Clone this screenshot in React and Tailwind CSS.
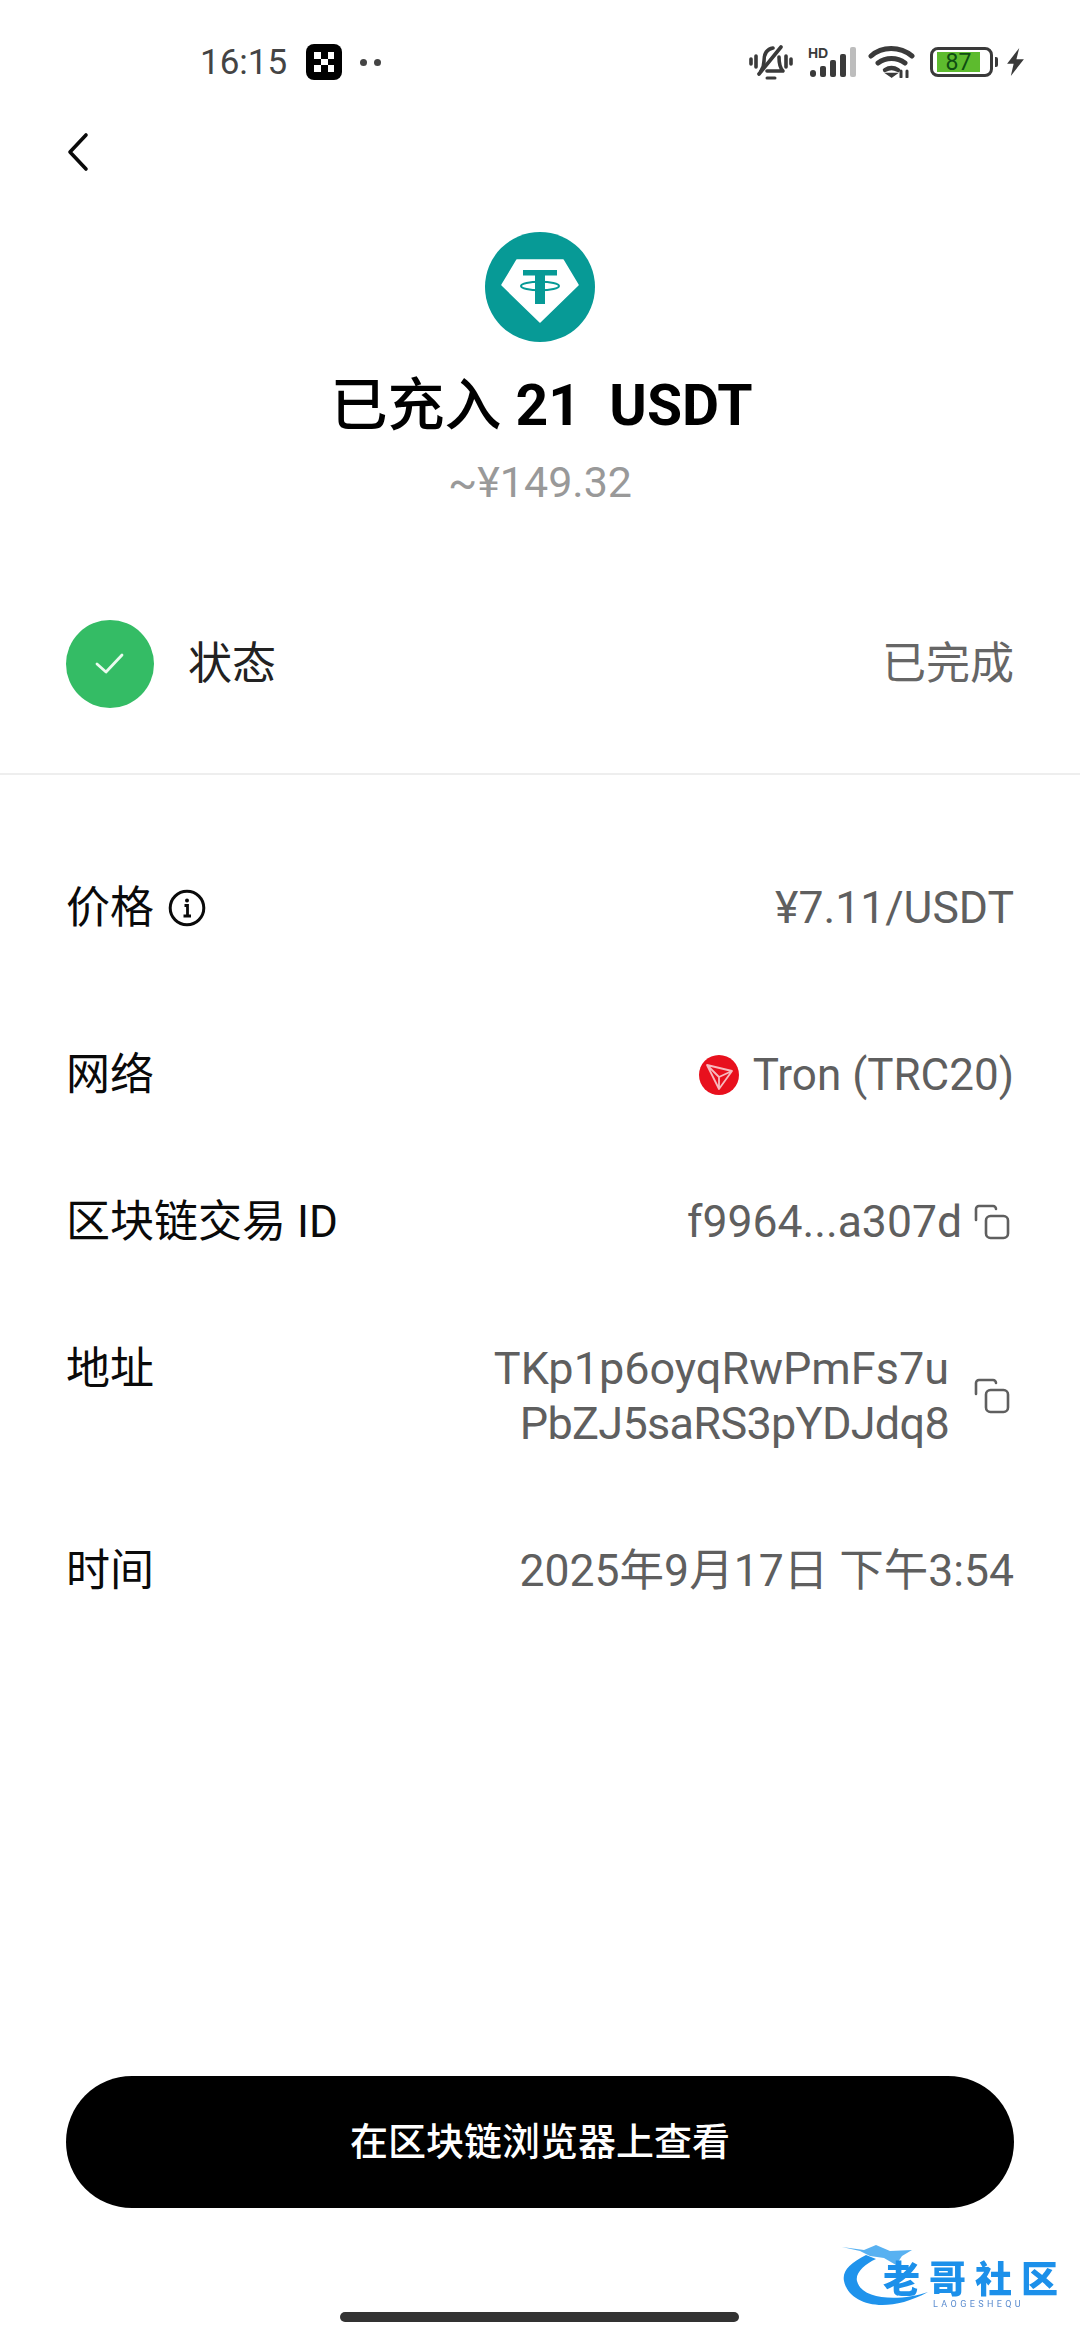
const FONT = "font-['Roboto','Noto_Sans_CJK_SC',sans-serif]";

function MuteIcon() {
  return (
    <svg width="44" height="36" viewBox="0 0 44 36" fill="none" stroke="#3a3a3a" strokeWidth="3.600" strokeLinecap="round" strokeLinejoin="round">
      <path d="M2 15v5M7 12v11M37 12v11M42 15v5" />
      <path d="M12 27c2-3 3-6 3-10 0-7 3-12 9-13" />
      <path d="M30 13c0 6 1 11 4 14H18" />
      <path d="M10 30 32 3" />
      <path d="M18 34h8" strokeWidth="3" />
    </svg>
  );
}

function SignalIcon() {
  return (
    <div className="relative w-[47px] h-[30px]">
      <span className="absolute left-[-1px] top-[-1px] text-[14px] leading-none font-bold text-[#3a3a3a] font-['Liberation_Sans',sans-serif]">HD</span>
      <svg className="absolute left-0 top-0" width="47" height="30" viewBox="0 0 47 30" fill="#3a3a3a">
        <rect x="1" y="23" width="6" height="7" rx="3" />
        <rect x="11" y="19" width="6" height="11" rx="2" />
        <rect x="21" y="13" width="6" height="17" rx="2" />
        <rect x="31" y="7" width="6" height="23" rx="2" />
        <rect x="41" y="0" width="6" height="30" rx="2" fill="#bdbdbd" />
      </svg>
    </div>
  );
}

function WifiIcon() {
  return (
    <svg width="47" height="32" viewBox="0 0 47 32" fill="none" stroke="#3a3a3a" strokeWidth="5" strokeLinecap="round">
      <path d="M3 10C14 0 32 0 44 10" />
      <path d="M10 17c8-6 19-6 27 0" />
      <path d="M17 24c4-2.500 9-2.500 13 0" strokeWidth="4.400" />
      <path d="M23.500 31l-5-3.500h10z" fill="#3a3a3a" strokeWidth="1.500" />
      <path d="M33 25v6M39 25v6" strokeWidth="3" />
    </svg>
  );
}

function Battery() {
  return (
    <div className="flex items-center gap-[2px]">
      <div className="w-[63px] h-[30px] border-[3px] border-[#3a3a3a] rounded-[8px] px-[4px] py-[2px] flex">
        <div className="w-[43px] bg-[#5dbb2e] flex items-center justify-center text-[#0f4d12] text-[23px] leading-none">87</div>
      </div>
      <div className="w-[3px] h-[10px] bg-[#3a3a3a] rounded-r-[2px]"></div>
    </div>
  );
}

function TetherLogo() {
  return (
    <svg width="110" height="110" viewBox="0 0 110 110">
      <circle cx="55" cy="55" r="55" fill="#079a96" />
      <path d="M32 28h46l15 25-38 37-38-37z" fill="#fff" stroke="#fff" strokeWidth="1.500" strokeLinejoin="round" />
      <path d="M38 38h34v5.500H60V72H50V43.500H38z" fill="#079a96" />
      <ellipse cx="55" cy="54" rx="19" ry="4.200" fill="none" stroke="#079a96" strokeWidth="2" />
    </svg>
  );
}

function TronLogo() {
  return (
    <svg width="40" height="40" viewBox="0 0 40 40">
      <circle cx="20" cy="20" r="20" fill="#e8101d" />
      <path d="M8 10l25 6-13 18zM8 10l12 12 13-6M20 22v12" fill="none" stroke="#f7b9bd" strokeWidth="1.800" strokeLinejoin="round" />
    </svg>
  );
}

function CopyIcon() {
  return (
    <svg width="36" height="36" viewBox="0 0 36 36" fill="none" stroke="#5f5f5f" strokeWidth="2.600" strokeLinecap="round" strokeLinejoin="round">
      <path d="M2 16V5a3 3 0 0 1 3-3h14a3 3 0 0 1 3 3" />
      <rect x="12" y="12" width="22" height="22" rx="4.500" />
    </svg>
  );
}

function InfoIcon() {
  return (
    <svg width="38" height="38" viewBox="0 0 38 38" fill="none">
      <circle cx="19" cy="19" r="16.800" stroke="#0a0a0a" strokeWidth="3" />
      <circle cx="19" cy="11.500" r="2" fill="#0a0a0a" />
      <path d="M16.500 16.500H19.500V27M15.500 27H23" stroke="#0a0a0a" strokeWidth="2.800" />
    </svg>
  );
}

function Watermark() {
  return (
    <div className="absolute left-[842px] top-[2245px] w-[225px] h-[70px] blur-[0.6px]">
      <svg className="absolute left-0 top-0" width="100" height="70" viewBox="0 0 100 70">
        <path d="M24 10C8 18 0 26 2 36c5 24 42 34 84 11-26 9-66 9-71-11-2-8 8-17 19-22z" fill="#1f93ec" />
        <path d="M0 2l22 3 12-5 14 6 22-1-10 6-6 9-12-7-14-2-10-5z" fill="#3ba3ef" opacity=".85" />
      </svg>
      <span className="absolute left-[41px] top-[19px] text-[37px] leading-[34px] font-black tracking-[9px] text-[#1c90ea] whitespace-nowrap">老哥社区</span>
      <span className="absolute left-[91px] top-[55px] text-[9px] leading-none tracking-[3.400px] text-[#5a8ccf] whitespace-nowrap">LAOGESHEQU</span>
    </div>
  );
}

function Row({ label, className, children }) {
  return (
    <div className={`flex justify-between items-start ${className}`}>
      <div className="flex items-center gap-[14px] text-[44px] leading-[60px] text-[#0a0a0a]">{label}</div>
      {children}
    </div>
  );
}

export default function App() {
  return (
    <div className={`relative w-[1080px] h-[2340px] bg-white overflow-hidden flex flex-col ${FONT}`}>
      {/* status bar */}
      <div className="flex items-center justify-between h-[68px] mt-[28px] pl-[200px] pr-[55px]">
        <div className="flex items-center">
          <span className="text-[35px] leading-none text-[#444]">16:15</span>
          <div className="ml-[19px] w-[36px] h-[36px] bg-black rounded-[8px] grid grid-cols-3 grid-rows-3 p-[8px]">
            {[1, 0, 1, 0, 1, 0, 1, 0, 1].map((on, i) => (
              <span key={i} className={on ? 'bg-white' : ''}></span>
            ))}
          </div>
          <div className="ml-[18px] flex gap-[7px]">
            <span className="w-[7px] h-[7px] rounded-full bg-[#444]"></span>
            <span className="w-[7px] h-[7px] rounded-full bg-[#444]"></span>
          </div>
        </div>
        <div className="flex items-center">
          <MuteIcon />
          <div className="ml-[16px]"><SignalIcon /></div>
          <div className="ml-[12px]"><WifiIcon /></div>
          <div className="ml-[15px]"><Battery /></div>
          <svg className="ml-[8px]" width="19" height="28" viewBox="0 0 20 30" fill="#3a3a3a">
            <path d="M14 0 1 17h7l-3 13 14-18h-8z" />
          </svg>
        </div>
      </div>

      {/* back */}
      <div className="pl-[67px] mt-[36px] h-[40px]">
        <svg width="22" height="40" viewBox="0 0 22 40" fill="none" stroke="#0a0a0a" strokeWidth="3.600" strokeLinecap="round" strokeLinejoin="round">
          <path d="M19 3 3 20l16 17" />
        </svg>
      </div>

      {/* amount */}
      <div className="flex flex-col items-center mt-[60px]">
        <TetherLogo />
        <div className="mt-[29px] pl-[3px] text-[57px] leading-[70px] text-black font-medium whitespace-pre">
          已充入 <span className="font-bold">21  USDT</span>
        </div>
        <div className="mt-[11px] text-[43px] leading-[60px] text-[#999]">~¥149.32</div>
      </div>

      {/* status */}
      <div className="flex items-center justify-between mt-[108px] px-[66px]">
        <div className="flex items-center">
          <div className="w-[88px] h-[88px] rounded-full bg-[#34bc65] flex items-center justify-center">
            <svg width="30" height="24" viewBox="0 0 30 24" fill="none" stroke="#eafbef" strokeWidth="2.800" strokeLinecap="round" strokeLinejoin="round">
              <path d="M2 12l9 8L27 3" />
            </svg>
          </div>
          <span className="ml-[34px] text-[44px] text-[#222]">状态</span>
        </div>
        <span className="text-[44px] text-[#666]">已完成</span>
      </div>
      <div className="h-[2px] bg-[#eeeeee] mt-[65px]"></div>

      {/* details */}
      <div className="flex flex-col px-[66px] text-[#5f5f5f] text-[44.500px] leading-[60px]">
        <Row className="mt-[103px]" label={<><span>价格</span><InfoIcon /></>}>
          <span>¥7.11/USDT</span>
        </Row>
        <Row className="mt-[107px]" label="网络">
          <div className="flex items-center gap-[14px] text-[44px]"><TronLogo /><span>Tron (TRC20)</span></div>
        </Row>
        <Row className="mt-[87px]" label="区块链交易 ID">
          <div className="flex items-center gap-[12px] pr-[4px]"><span>f9964...a307d</span><CopyIcon /></div>
        </Row>
        <Row className="mt-[87px]" label="地址">
          <div className="flex items-center gap-[25px] pr-[4px] mt-[2px]">
            <span className="text-right leading-[55px] text-[45px]">
              TKp1p6oyqRwPmFs7u<br /><span className="tracking-[-0.700px]">PbZJ5saRS3pYDJdq8</span>
            </span>
            <CopyIcon />
          </div>
        </Row>
        <Row className="mt-[90px]" label="时间">
          <span>2025年9月17日 下午3:54</span>
        </Row>
      </div>

      {/* action */}
      <div className="mt-auto px-[66px] pb-[132px]">
        <div className="h-[132px] rounded-full bg-black flex items-center justify-center text-white text-[38px] font-medium">在区块链浏览器上查看</div>
      </div>

      <Watermark />
      <div className="absolute bottom-[18px] left-[340px] w-[399px] h-[10px] rounded-full bg-[#333]"></div>
    </div>
  );
}
